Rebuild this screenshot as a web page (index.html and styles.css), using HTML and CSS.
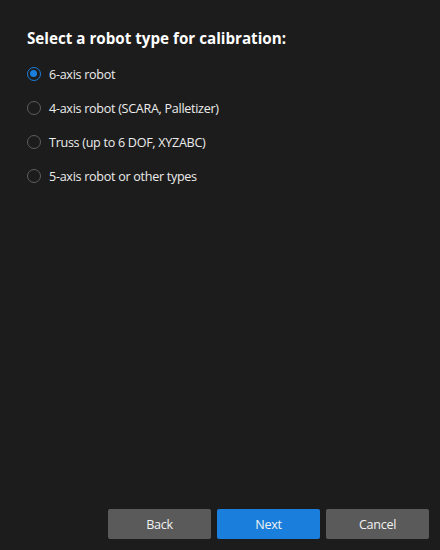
FILE: index.html
```html
<!DOCTYPE html>
<html>
<head>
<meta charset="utf-8">
<link rel="stylesheet" href="styles.css">
</head>
<body>
<div class="dialog">
  <div class="content">
    <h1 class="title">Select a robot type for calibration:</h1>
    <div class="options">
      <label class="option"><span class="radio checked"></span><span class="label">6-axis robot</span></label>
      <label class="option"><span class="radio"></span><span class="label">4-axis robot (SCARA, Palletizer)</span></label>
      <label class="option"><span class="radio"></span><span class="label">Truss (up to 6 DOF, XYZABC)</span></label>
      <label class="option"><span class="radio"></span><span class="label">5-axis robot or other types</span></label>
    </div>
  </div>
  <div class="footer">
    <button class="btn">Back</button>
    <button class="btn primary">Next</button>
    <button class="btn">Cancel</button>
  </div>
</div>
</body>
</html>
```
FILE: styles.css
```css
html, body {
  margin: 0;
  padding: 0;
  background: #1c1c1c;
}
body {
  width: 440px;
  height: 550px;
  font-family: "Open Sans", "Noto Sans", sans-serif;
  color: #f0f0f0;
}
.dialog {
  height: 550px;
  display: flex;
  flex-direction: column;
  box-sizing: border-box;
}
.content {
  flex: 1;
  padding: 27px 27px 0 27px;
}
.title {
  margin: 0 0 15px 0;
  font-size: 15.2px;
  font-weight: 700;
  line-height: 22px;
  color: #ffffff;
}
.options {
  display: flex;
  flex-direction: column;
  gap: 14px;
}
.option {
  display: flex;
  align-items: center;
  gap: 8px;
  height: 20px;
  font-size: 12.6px;
  letter-spacing: -0.3px;
  color: #ececec;
}
.radio {
  width: 14px;
  height: 14px;
  box-sizing: border-box;
  border-radius: 50%;
  border: 1.5px solid #5e5e5e;
  flex: none;
  position: relative;
}
.radio.checked {
  border-color: #1a7fdc;
}
.radio.checked::after {
  content: "";
  position: absolute;
  left: 2px;
  top: 2px;
  width: 7px;
  height: 7px;
  border-radius: 50%;
  background: #1a7fdc;
}
.footer {
  display: flex;
  justify-content: flex-end;
  gap: 6px;
  padding: 0 11px 11px 0;
}
.btn {
  width: 103px;
  height: 30px;
  border: none;
  border-radius: 2px;
  background: #5a5a5a;
  color: #f2f2f2;
  font-family: "Open Sans", "Noto Sans", sans-serif;
  font-size: 12.6px;
  letter-spacing: -0.3px;
  padding: 0;
}
.btn.primary {
  background: #1a7fdc;
}
```
